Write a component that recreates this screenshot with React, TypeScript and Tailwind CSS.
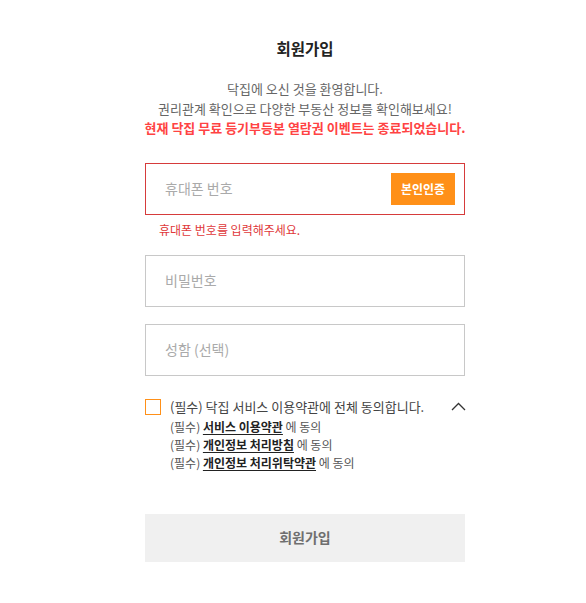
import React, { useState } from 'react';

const font = { fontFamily: '"Noto Sans CJK KR", "Noto Sans", sans-serif' };

const terms = ['서비스 이용약관', '개인정보 처리방침', '개인정보 처리위탁약관'];

export default function App() {
  const [phone, setPhone] = useState('');
  const [password, setPassword] = useState('');
  const [name, setName] = useState('');
  const [agree, setAgree] = useState(false);

  return (
    <div className="min-h-[603px] bg-white" style={font}>
      <div className="ml-[145px] w-[320px] pt-[36px]">
        <h1 className="text-center text-[15.5px] font-bold leading-[24px] text-[#222]">회원가입</h1>

        <div className="-mx-[20px] mt-[19px] whitespace-nowrap text-center text-[13px] leading-[19.5px] text-[#666]">
          <p>닥집에 오신 것을 환영합니다.</p>
          <p>권리관계 확인으로 다양한 부동산 정보를 확인해보세요!</p>
          <p className="font-bold text-[#ff4343]">현재 닥집 무료 등기부등본 열람권 이벤트는 종료되었습니다.</p>
        </div>

        <div className="mt-[25px] flex h-[52px] items-center border border-[#d63b3b] pl-[19px] pr-[9px]">
          <input
            value={phone}
            onChange={(e) => setPhone(e.target.value)}
            placeholder="휴대폰 번호"
            className="min-w-0 flex-1 text-[14px] text-[#333] outline-none placeholder:text-[#aaa]"
          />
          <button className="h-[32px] w-[64px] bg-[#ff9018] text-[12px] font-bold text-white">본인인증</button>
        </div>
        <p className="mt-[6px] pl-[14px] text-[12px] leading-[18px] text-[#e0383a]">휴대폰 번호를 입력해주세요.</p>

        <div className="mt-[16px] flex h-[52px] items-center border border-[#c8c8c8] px-[19px]">
          <input
            type="password"
            value={password}
            onChange={(e) => setPassword(e.target.value)}
            placeholder="비밀번호"
            className="w-full text-[14px] text-[#333] outline-none placeholder:text-[#aaa]"
          />
        </div>

        <div className="mt-[17px] flex h-[52px] items-center border border-[#c8c8c8] px-[19px]">
          <input
            value={name}
            onChange={(e) => setName(e.target.value)}
            placeholder="성함 (선택)"
            className="w-full text-[14px] text-[#333] outline-none placeholder:text-[#aaa]"
          />
        </div>

        <div className="mt-[21px] flex items-center">
          <button
            onClick={() => setAgree(!agree)}
            className={`h-[16px] w-[16px] shrink-0 border border-[#ff9018] ${agree ? 'bg-[#ff9018]' : 'bg-white'}`}
          />
          <span className="ml-[9px] flex-1 text-[13px] leading-[20px] text-[#444]">
            (필수) 닥집 서비스 이용약관에 전체 동의합니다.
          </span>
          <svg width="15" height="9" viewBox="0 0 15 9" className="mr-[-1px]">
            <path d="M1 8 L7.5 1.5 L14 8" fill="none" stroke="#333" strokeWidth="1.3" />
          </svg>
        </div>

        <ul className="mt-[1px] pl-[25px] text-[12px] leading-[18px] text-[#555]">
          {terms.map((t) => (
            <li key={t}>
              (필수) <span className="font-bold text-[#222] underline underline-offset-2">{t}</span> 에 동의
            </li>
          ))}
        </ul>

        <button className="mt-[42px] h-[48px] w-full bg-[#f0f0f0] text-[14px] font-bold text-[#6f6f6f]">회원가입</button>
      </div>
    </div>
  );
}
